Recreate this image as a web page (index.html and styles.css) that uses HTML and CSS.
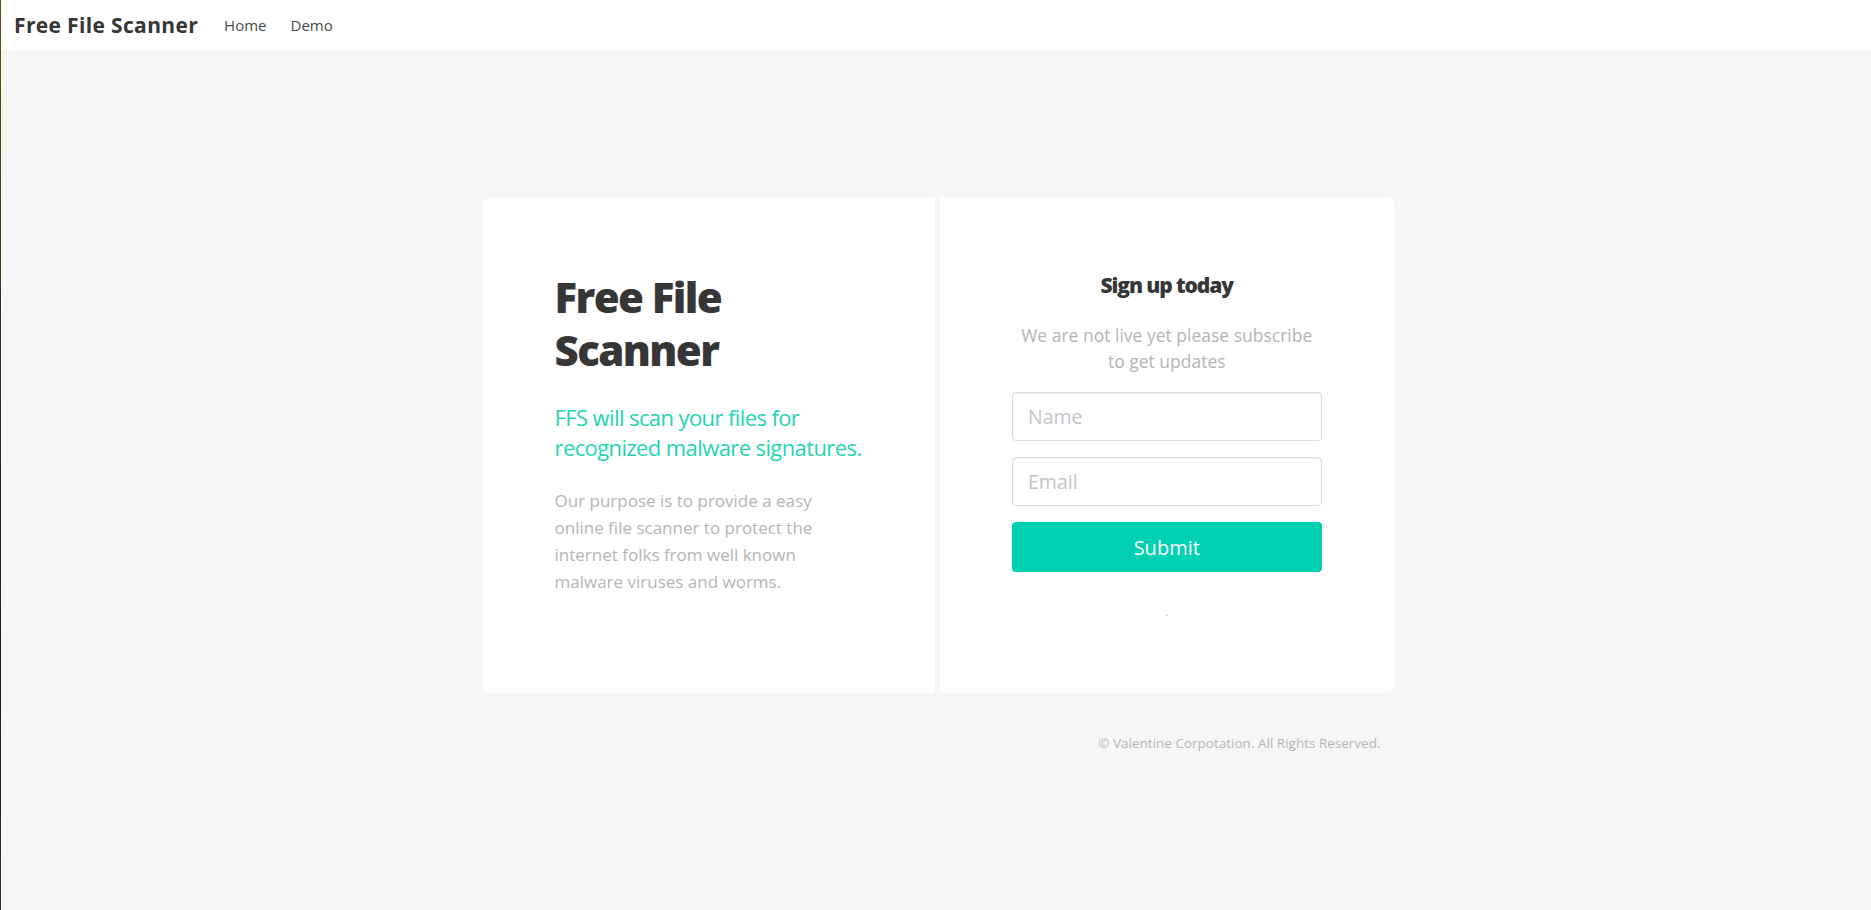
FILE: index.html
```html
<!DOCTYPE html>
<html lang="en">
<head>
<meta charset="UTF-8">
<meta name="viewport" content="width=device-width, initial-scale=1.0">
<title>Free File Scanner</title>
<link rel="stylesheet" href="styles.css">
</head>
<body>
<nav class="navbar">
  <a class="brand" href="#">Free File Scanner</a>
  <a class="nav-link" href="#">Home</a>
  <a class="nav-link" href="#">Demo</a>
</nav>

<section class="hero">
  <div class="card-row">
    <div class="panel panel-left">
      <h1 class="title">Free File<br>Scanner</h1>
      <h2 class="subtitle">FFS will scan your files for recognized malware signatures.</h2>
      <p class="about">Our purpose is to provide a easy online file scanner to protect the internet folks from well known malware viruses and worms.</p>
    </div>
    <div class="panel panel-right">
      <h3 class="signup-title">Sign up today</h3>
      <p class="signup-text">We are not live yet please subscribe to get updates</p>
      <form class="signup-form" onsubmit="return false">
        <input class="input" type="text" placeholder="Name">
        <input class="input" type="email" placeholder="Email">
        <button class="button" type="submit">Submit</button>
      </form>
      <p class="status">.</p>
    </div>
  </div>
  <p class="footer">&copy; Valentine Corpotation. All Rights Reserved.</p>
</section>
</body>
</html>
```

FILE: styles.css
```css
html, body {
  margin: 0;
  padding: 0;
}
body {
  font-family: "Open Sans", "Noto Sans", sans-serif;
  background: #f6f6f6;
  color: #4a4a4a;
  min-height: 910px;
  box-sizing: border-box;
  border-left: 1px solid #2b2116;
  border-image: linear-gradient(#6b4a22, #3a2a14 40%, #1e1c22 75%, #2a2c48) 1;
}
a {
  text-decoration: none;
}
.navbar {
  display: flex;
  align-items: center;
  height: 50px;
  background: #fff;
}
.brand {
  margin-left: 13px;
  font-size: 21px;
  font-weight: 700;
  color: #363636;
  letter-spacing: 0.35px;
}
.brand + .nav-link {
  margin-left: 26px;
}
.nav-link {
  font-size: 15px;
  color: #4a4a4a;
  margin-right: 24px;
}
.hero {
  width: 912px;
  margin: 148px auto 0 auto;
  padding-left: 3px;
}
.card-row {
  display: grid;
  grid-template-columns: 1fr 1fr;
  gap: 5px;
  height: 495px;
}
.panel {
  background: #fff;
  box-sizing: border-box;
}
.panel-left {
  border-radius: 8px 0 0 8px;
  padding: 72px 40px 0 73px;
}
.panel-right {
  border-radius: 0 8px 8px 0;
  padding: 72px 72px 0 72px;
  text-align: center;
}
.title {
  margin: 0;
  font-size: 42px;
  line-height: 53px;
  font-weight: 800;
  letter-spacing: -1.6px;
  color: #363636;
}
.subtitle {
  margin: 26px 0 0 0;
  font-size: 22px;
  line-height: 30px;
  font-weight: 400;
  letter-spacing: -0.6px;
  color: #1fd6b0;
  max-width: 330px;
}
.about {
  margin: 25px 0 0 0;
  font-size: 17px;
  line-height: 27px;
  color: #b5b5b5;
  max-width: 265px;
}
.signup-title {
  margin: 0;
  font-size: 21px;
  line-height: 30px;
  font-weight: 800;
  letter-spacing: -1.1px;
  color: #363636;
}
.signup-text {
  margin: 22px auto 0 auto;
  max-width: 300px;
  font-size: 17.5px;
  line-height: 26px;
  color: #b5b5b5;
}
.signup-form {
  display: flex;
  flex-direction: column;
  gap: 16px;
  margin-top: 18px;
}
.input {
  height: 49px;
  box-sizing: border-box;
  border: 1px solid #dbdbdb;
  border-radius: 4px;
  padding: 0 15px;
  font-family: inherit;
  font-size: 19.5px;
  color: #363636;
  box-shadow: inset 0 1px 2px rgba(10,10,10,0.06);
}
.input::placeholder {
  color: #c4c4c8;
}
.button {
  height: 50px;
  border: none;
  border-radius: 4px;
  background: #00d1b2;
  color: #fff;
  font-family: inherit;
  font-size: 20px;
  cursor: pointer;
}
.status {
  margin: 33px 0 0 0;
  font-size: 10px;
  color: #b5b5b5;
}
.footer {
  margin: 41px 13px 0 0;
  text-align: right;
  font-size: 13.5px;
  color: #b5b5b5;
}
```
